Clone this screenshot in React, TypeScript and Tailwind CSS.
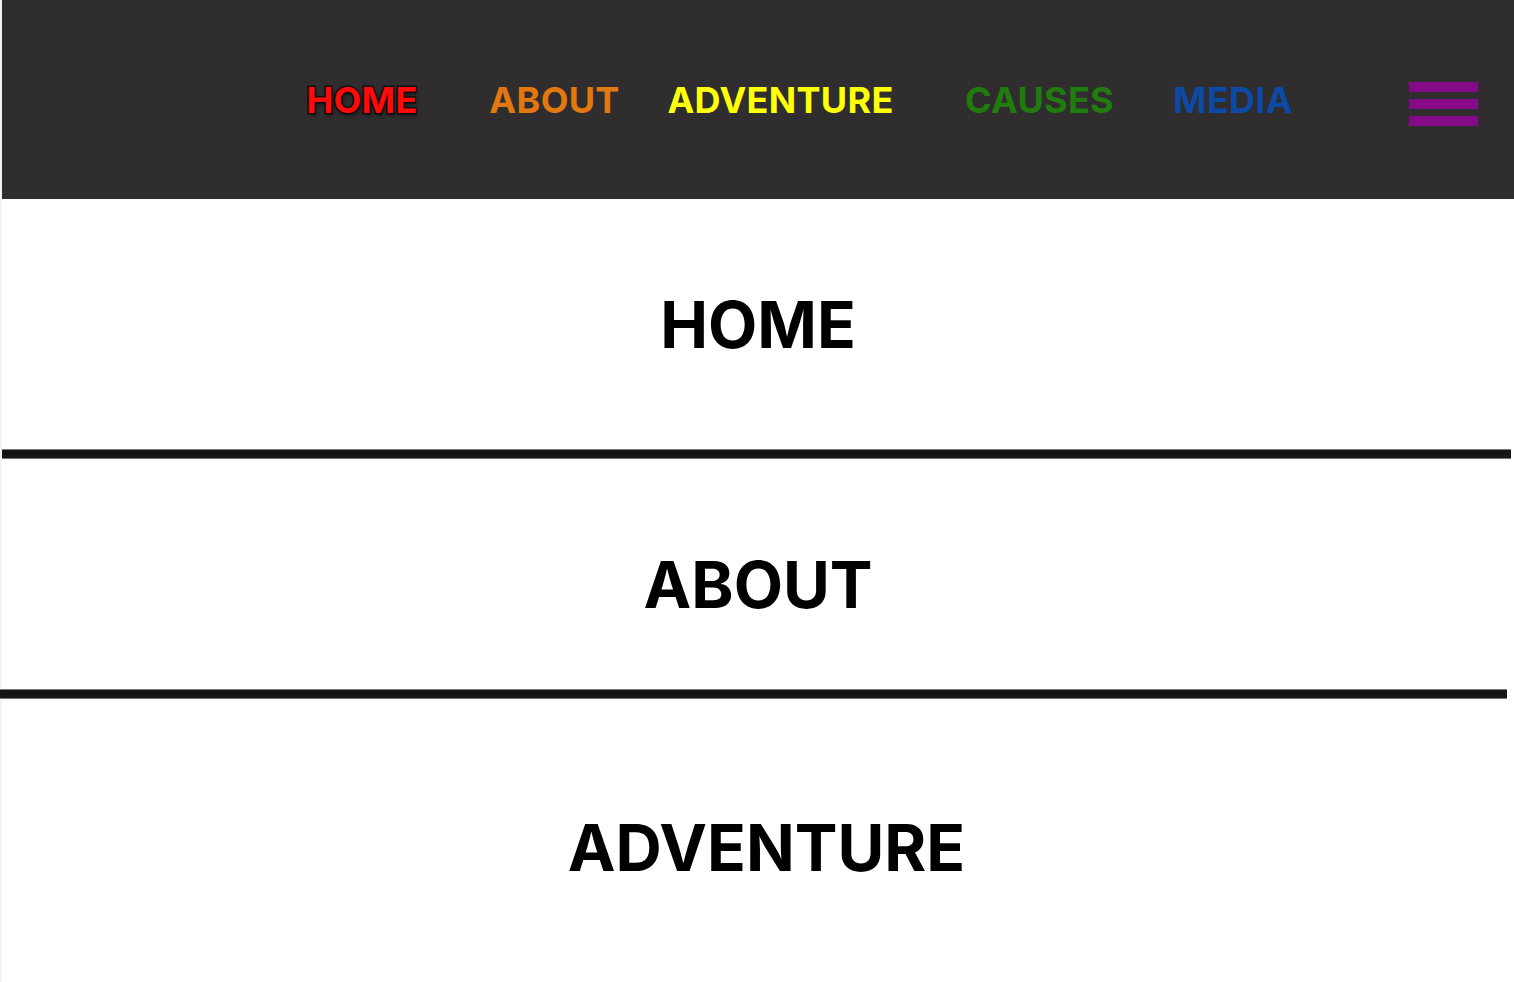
import React from 'react';

const links = [
  { label: 'HOME', color: 'text-[#ff0a0a]', box: 'w-[200px]', extra: '[-webkit-text-stroke:3px_#111] [paint-order:stroke_fill] [text-shadow:2px_3px_4px_rgba(0,0,0,0.45)]' },
  { label: 'ABOUT', color: 'text-[#e2780f]', box: 'w-[185px]', extra: '' },
  { label: 'ADVENTURE', color: 'text-[#ffff0a]', box: 'w-[267px]', extra: '' },
  { label: 'CAUSES', color: 'text-[#217b0e]', box: 'w-[251px]', extra: '' },
  { label: 'MEDIA', color: 'text-[#0c4aa6]', box: 'w-[136px]', extra: '' },
];

export default function App() {
  return (
    <div className="min-h-screen bg-[#f4f4f4] font-['Inter','Liberation_Sans',sans-serif]">
      {/* Header */}
      <header className="ml-[2px] h-[199px] bg-[#2f2d2e] flex items-center">
        <nav className="flex items-center pl-[260px]">
          {links.map((l) => (
            <a key={l.label} href="#" className={`${l.box} text-center`}>
              <span className={`text-[36px] font-bold tracking-[0.3px] ${l.color} ${l.extra}`}>{l.label}</span>
            </a>
          ))}
        </nav>
        <button className="ml-auto mr-[36px] mt-[9px] flex flex-col gap-[7px]">
          <span className="block w-[69px] h-[10px] bg-[#850a88]"></span>
          <span className="block w-[69px] h-[10px] bg-[#850a88]"></span>
          <span className="block w-[69px] h-[10px] bg-[#850a88]"></span>
        </button>
      </header>

      {/* Sections */}
      <section className="ml-[2px] bg-white h-[250px] flex items-center justify-center">
        <h1 className="text-[64px] leading-[77px] font-bold text-black">HOME</h1>
      </section>
      <div className="ml-[2px] bg-white pr-[3px]">
        <div className="h-[10px] bg-[#161616] border-y border-[#7a7a7a]"></div>
      </div>

      <section className="ml-[2px] bg-white h-[230px] pt-[87px]">
        <h1 className="text-[64px] leading-[77px] font-bold text-black text-center">ABOUT</h1>
      </section>
      <div className="bg-white pr-[7px]">
        <div className="h-[10px] bg-[#161616] border-y border-[#7a7a7a]"></div>
      </div>

      <section className="ml-[2px] bg-white h-[300px] pt-[110px] pl-[17px]">
        <h1 className="text-[64px] leading-[77px] font-bold text-black text-center">ADVENTURE</h1>
      </section>
    </div>
  );
}
